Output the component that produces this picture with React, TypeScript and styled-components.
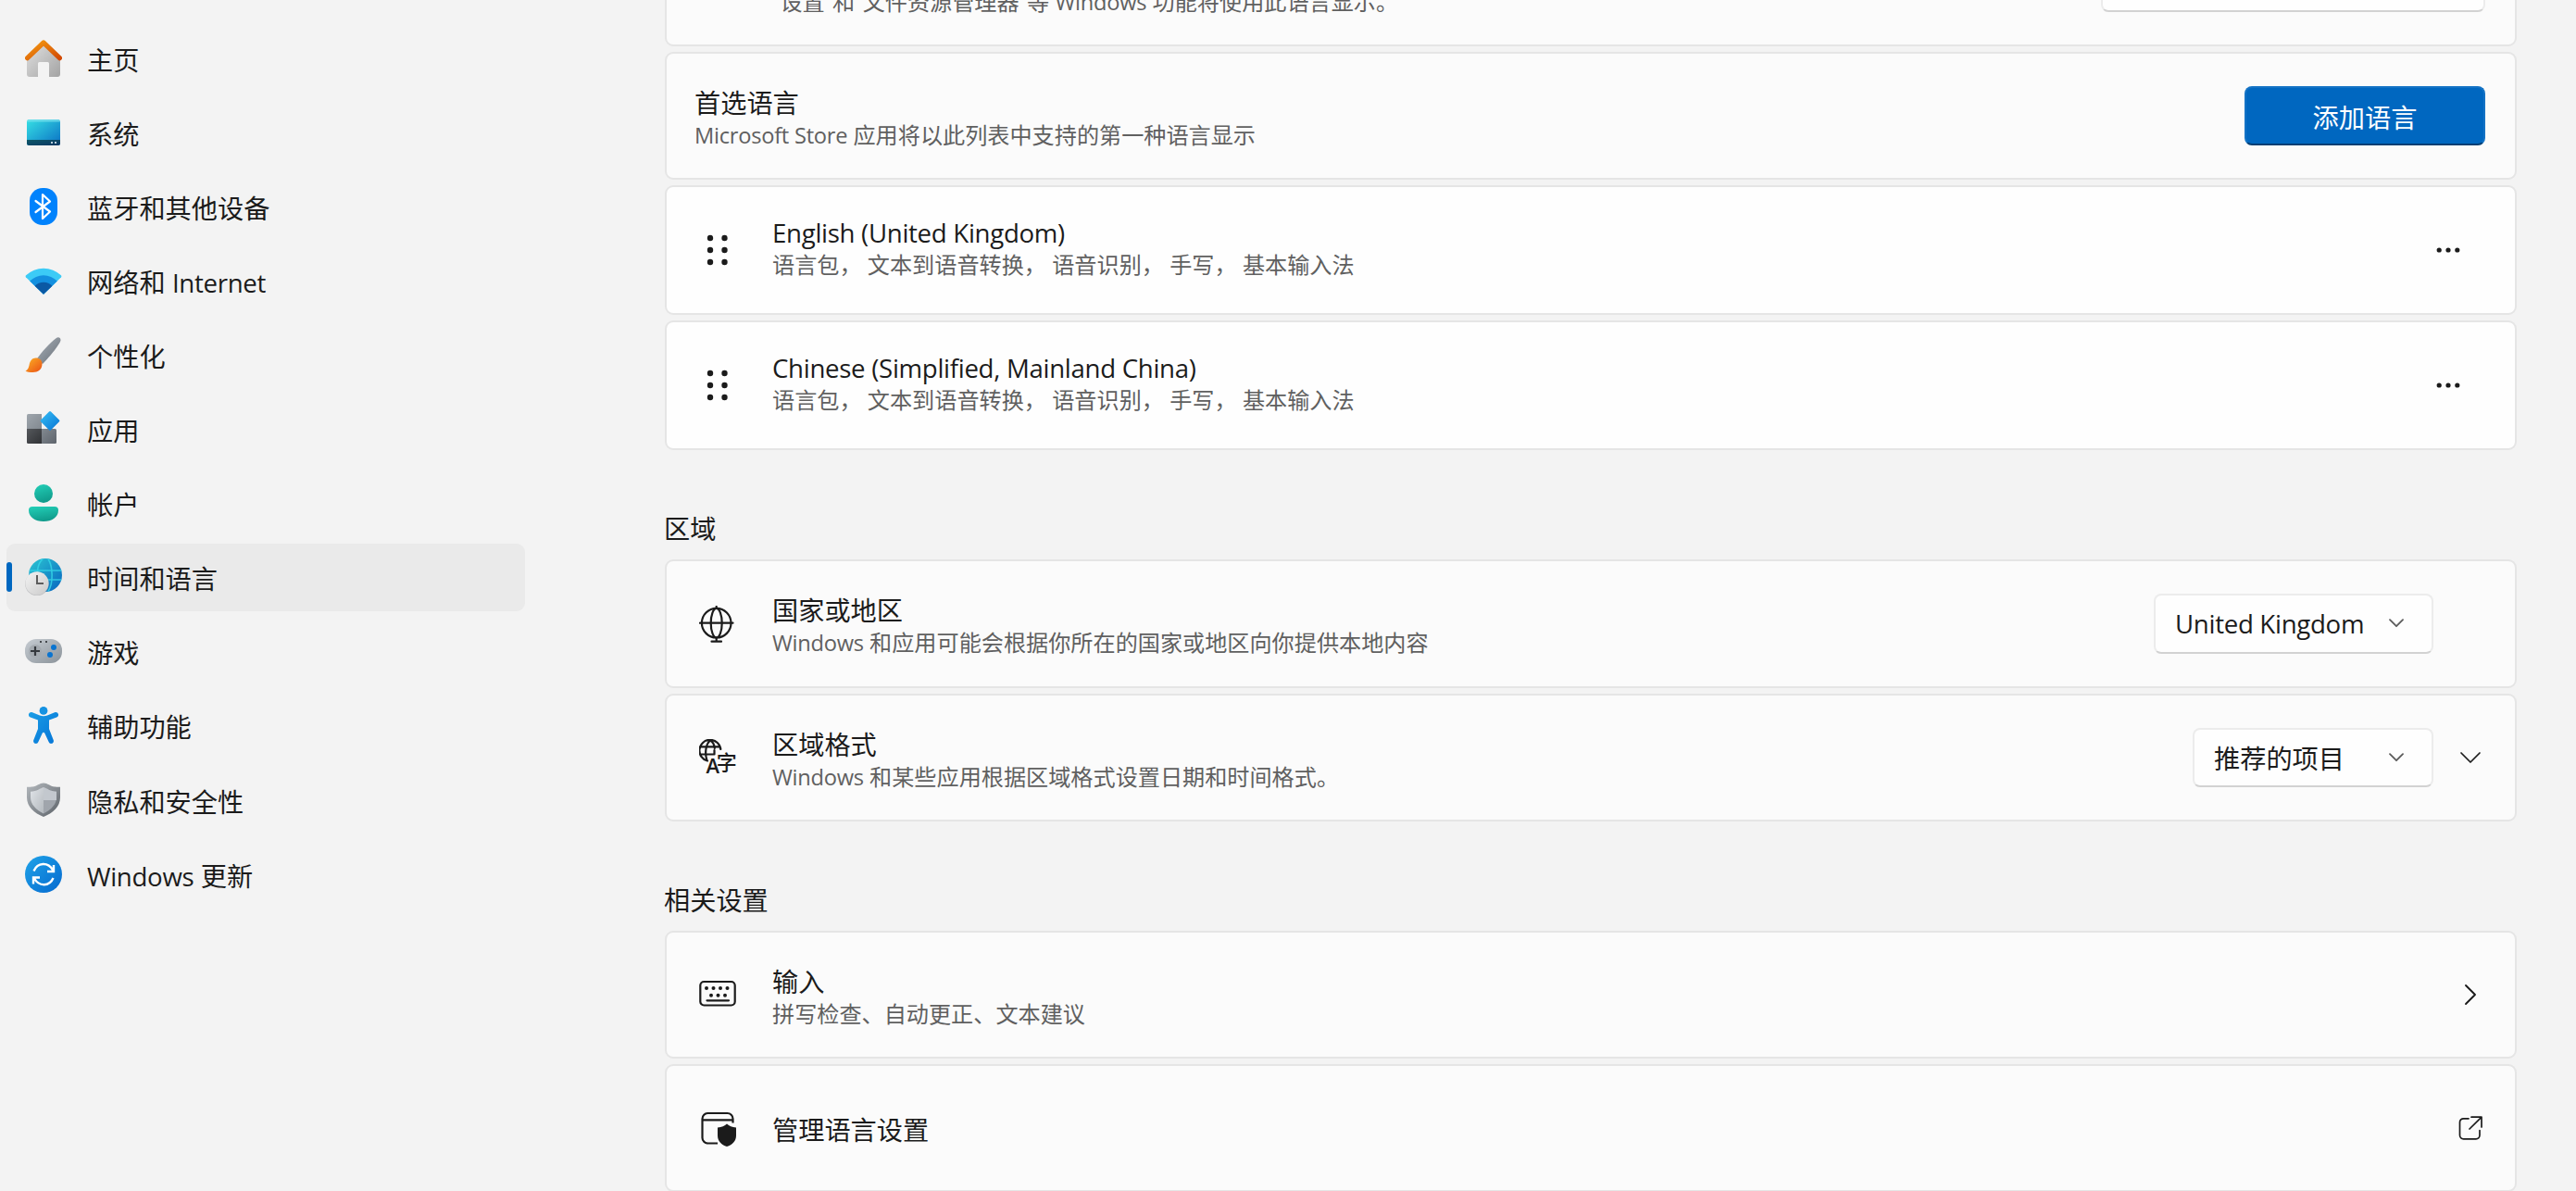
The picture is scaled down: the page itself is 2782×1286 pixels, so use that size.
import type { ReactNode } from 'react';
import styled, { createGlobalStyle, css } from 'styled-components';

const GlobalStyle = createGlobalStyle`
    * {
        box-sizing: border-box;
    }

    body {
        margin: 0;
        height: 1286px;
        overflow: hidden;
        background-color: #f3f3f3;
        color: #1b1b1b;
        font-family: 'Open Sans', 'Noto Sans CJK SC', sans-serif;
        font-size: 28.2px;
    }
`;

const Layout = styled.div`
    display: flex;
    height: 1286px;
    overflow: hidden;
`;

const Sidebar = styled.nav`
    flex: 0 0 718px;
    display: flex;
    flex-direction: column;
    gap: 7.1px;
    padding: 26.1px 0 0 7px;
`;

const NavItem = styled.a<{ $active?: boolean }>`
    display: flex;
    align-items: center;
    width: 560px;
    height: 73px;
    flex: none;
    border-radius: 9px;
    background-color: ${(p) => (p.$active ? '#eaeaea' : 'transparent')};
`;

const Indicator = styled.span<{ $active?: boolean }>`
    width: 6px;
    height: 32px;
    margin-right: 14px;
    border-radius: 3px;
    background-color: ${(p) => (p.$active ? '#0067c0' : 'transparent')};
`;

const NavLabel = styled.span`
    margin: 4px 0 0 27px;
    line-height: 40px;
    white-space: pre;
`;

const Latin = styled.span`
    font-size: 0.98em;
    letter-spacing: -0.011em;
`;

const Main = styled.main`
    width: 2000px;
    margin-top: -88px;
    flex: none;
`;

const Section = styled.section`
    display: flex;
    flex-direction: column;
    gap: 6px;
`;

const SectionTitle = styled.h2<{ $height: number }>`
    height: ${(p) => p.$height}px;
    margin: 0 0 -6px -1px;
    padding-bottom: 13px;
    display: flex;
    align-items: flex-end;
    font-size: 28.2px;
    font-weight: 400;
    line-height: 40px;
`;

const Card = styled.div<{ $white?: boolean; $height?: number; $slot?: boolean }>`
    display: flex;
    align-items: center;
    flex: none;
    height: ${(p) => p.$height ?? 138}px;
    padding: 0 ${(p) => (p.$slot ? 8 : 32)}px 0 30px;
    border: 2px solid #e5e5e5;
    border-radius: 9px;
    background-color: ${(p) => (p.$white ? '#fefefe' : '#fbfbfb')};
`;

const IconSlot = styled.div`
    display: flex;
    width: 84px;
    padding-left: 5px;
`;

const CardText = styled.div<{ $raised?: boolean }>`
    flex: 1;
    padding-${(p) => (p.$raised ? 'bottom: 7' : 'top: 3')}px;
    white-space: pre;
`;

const Title = styled.div`
    line-height: 38px;
`;

const Description = styled.div`
    color: #606060;
    font-size: 24.15px;
    line-height: 32px;
`;

const raised = css`
    border-radius: 8px;
    border: 2px solid #ececec;
    border-bottom-color: #d2d2d2;
    background-color: #fefefe;
`;

const Select = styled.div<{ $width: number; $height?: number }>`
    ${raised}
    height: ${(p) => p.$height ?? 65}px;
    display: flex;
    align-items: center;
    justify-content: space-between;
    width: ${(p) => p.$width}px;
    padding: 0 30px 1px 21px;
    white-space: pre;
`;

const PrimaryButton = styled.button`
    width: 260px;
    height: 64px;
    padding: 0;
    border: 2px solid #1473c5;
    border-bottom-color: #003e73;
    border-radius: 8px;
    background-color: #0067c0;
    color: #fff;
    font: inherit;
`;

const ActionSlot = styled.div`
    display: flex;
    align-items: center;
    justify-content: center;
    width: 80px;
`;

// Latin runs sit a touch tighter than the Chinese text around them
const mixed = (text: string): ReactNode =>
    text
        .split(/([A-Za-z][\x20-\x7e]*[A-Za-z)])/)
        .map((part, i) => (i % 2 ? <Latin key={i}>{part}</Latin> : part));

const NavSvg = ({ children }: { children: ReactNode }) => (
    <svg width="40" height="40" viewBox="0 0 40 40" fill="none">
        {children}
    </svg>
);

const Gradient = ({ id, from, to }: { id: string; from: string; to: string }) => (
    <linearGradient id={id} x1="0" y1="0" x2="1" y2="1">
        <stop stopColor={from} />
        <stop offset="1" stopColor={to} />
    </linearGradient>
);

const HomeIcon = () => (
    <NavSvg>
        <Gradient id="homeBody" from="#e2e2e2" to="#a3a3a3" />
        <Gradient id="homeRoof" from="#f59b10" to="#d24a05" />
        <path d="M2 18 20 3l18 15v19a3 3 0 0 1-3 3h-9V25.500a1.500 1.500 0 0 0-1.500-1.500h-9a1.500 1.500 0 0 0-1.500 1.500V40H5a3 3 0 0 1-3-3z" fill="url(#homeBody)" />
        <path d="M2.600 19.700 20 3l17.400 16.700" stroke="url(#homeRoof)" strokeWidth="5.200" strokeLinecap="round" strokeLinejoin="round" />
    </NavSvg>
);

const SystemIcon = () => (
    <NavSvg>
        <Gradient id="sysScreen" from="#36e0e4" to="#0a6fc4" />
        <Gradient id="sysBar" from="#0e5868" to="#0b3763" />
        <rect x="2" y="6" width="36" height="28" rx="2.500" fill="url(#sysScreen)" />
        <path d="M2 8.500A2.500 2.500 0 0 1 4.500 6h31A2.500 2.500 0 0 1 38 8.500z" fill="#7fe3ee" opacity=".7" />
        <path d="M2 28h36v3.500a2.500 2.500 0 0 1-2.500 2.500h-31A2.500 2.500 0 0 1 2 31.500z" fill="url(#sysBar)" />
        <path d="M28 30h2v2h-2zM32 30h2v2h-2z" fill="#b9cddb" />
    </NavSvg>
);

const BluetoothIcon = () => (
    <NavSvg>
        <rect x="5" width="30" height="40" rx="14" fill="#0082fc" />
        <path d="m11.500 14 15.500 11.500-8 7.500V7l8 7.500L11.500 26" stroke="#fff" strokeWidth="2.200" strokeLinejoin="round" strokeLinecap="round" />
    </NavSvg>
);

const WifiIcon = () => (
    <NavSvg>
        <path d="M20 34.800.9 16.200q-.7-1 .2-1.900A27.500 27.500 0 0 1 38.900 14.300q.9.900.2 1.900z" fill="#3ccbf6" />
        <path d="M20 34.800 5.200 20.400a21 21 0 0 1 29.600 0z" fill="#1490df" />
        <path d="M20 34.800 10.600 25.700a13.200 13.200 0 0 1 18.800 0z" fill="#0b59a4" />
    </NavSvg>
);

const BrushIcon = () => (
    <NavSvg>
        <Gradient id="brushHandle" from="#a9b1b9" to="#686f77" />
        <Gradient id="brushTip" from="#fcb426" to="#ea4f14" />
        <path d="M12.500 25C18 17 27 7 33.500 2.200c2.300-1.700 5-.9 5 2C38.500 7.500 27 22 19 30z" fill="url(#brushHandle)" />
        <path d="M11.500 23.500c4.500 0 7 2.500 7 6.500 0 6-4.500 9-10 9-3.500 0-6.500-.4-8-1.500 3-1.500 3.500-3.500 4.200-7 .8-4.200 3.300-7 6.800-7z" fill="url(#brushTip)" />
    </NavSvg>
);

const AppsIcon = () => (
    <NavSvg>
        <Gradient id="appsDark" from="#55585c" to="#303235" />
        <Gradient id="appsLight" from="#9fa6ad" to="#828990" />
        <Gradient id="appsMid" from="#828990" to="#5e646c" />
        <Gradient id="appsBlue" from="#38c0f5" to="#0673d4" />
        <path d="M3.500 4H18v16H2V5.500A1.500 1.500 0 0 1 3.500 4z" fill="url(#appsLight)" />
        <path d="M2 20h16v16H3.500A1.500 1.500 0 0 1 2 34.500z" fill="url(#appsDark)" />
        <path d="M18 20h14.500a1.500 1.500 0 0 1 1.500 1.500v13a1.500 1.500 0 0 1-1.500 1.500H18z" fill="url(#appsMid)" />
        <path d="M26 1.400q1-1 2 0l9 9q.9.900 0 1.800l-9 9q-1 1-2 0l-9-9q-.9-.9 0-1.800z" fill="url(#appsBlue)" />
    </NavSvg>
);

const AccountIcon = () => (
    <NavSvg>
        <linearGradient id="account" x1="0" y1="0" x2=".3" y2="1">
            <stop stopColor="#23d0b8" />
            <stop offset="1" stopColor="#109c8c" />
        </linearGradient>
        <circle cx="20" cy="10" r="10" fill="url(#account)" />
        <path d="M8 24h24a4 4 0 0 1 4 4c0 7.500-7 12-16 12S4 35.500 4 28a4 4 0 0 1 4-4z" fill="url(#account)" />
    </NavSvg>
);

const TimeIcon = () => (
    <NavSvg>
        <Gradient id="timeGlobe" from="#2cc6d2" to="#0664c0" />
        <Gradient id="timeClock" from="#f4f4f4" to="#c9c9c9" />
        <circle cx="22" cy="18" r="18" fill="url(#timeGlobe)" />
        <path d="M4.600 13h34.800M22 23h17.400M19 0.600C13 6 12 17 15 27M25 .6C30 8 31 27 25 35.500" stroke="#35d3e6" strokeWidth="1.600" opacity=".85" />
        <circle cx="13" cy="27.500" r="12.800" fill="#9d9fa3" opacity=".55" />
        <circle cx="13" cy="26.800" r="12.600" fill="url(#timeClock)" />
        <path d="M13 18v9h7" stroke="#5d5d5d" strokeWidth="2" />
    </NavSvg>
);

const GameIcon = () => (
    <NavSvg>
        <Gradient id="gameBody" from="#c6ccd2" to="#8b939a" />
        <rect y="7" width="40" height="26" rx="12" fill="url(#gameBody)" />
        <circle cx="11" cy="20" r="7" fill="#a4aab0" />
        <path d="M11 15v10M6 20h10" stroke="#35393e" strokeWidth="2.200" />
        <circle cx="31" cy="16" r="3" fill="#0a74d0" />
        <circle cx="27" cy="24" r="3" fill="#0a74d0" />
        <path d="M16 9h2v2h-2zM22 9h2v2h-2z" fill="#45494d" />
    </NavSvg>
);

const AccessibilityIcon = () => (
    <NavSvg>
        <Gradient id="access" from="#1b9de6" to="#0474d6" />
        <circle cx="20" cy="4.400" r="4.400" fill="#1592e2" />
        <path d="M4 8.300c.5-1.900 2.300-2.700 4-2l8 3.200c2.600 1 5.400 1 8 0l8-3.200c1.700-.7 3.500.1 4 2 .3 1.300-.4 2.600-1.800 3.100L26 14.600V24l4.700 12c.6 1.700-.1 3.200-1.600 3.800-1.500.5-2.900-.2-3.500-1.800L21.200 28.500q-1.200-1.600-2.400 0L14.400 38c-.6 1.600-2 2.300-3.500 1.800-1.500-.6-2.200-2.100-1.600-3.800L14 24v-9.400l-8.200-3.200C4.400 10.900 3.700 9.600 4 8.300z" fill="url(#access)" />
    </NavSvg>
);

const ShieldIcon = () => (
    <NavSvg>
        <Gradient id="shieldRim" from="#b3b8bd" to="#5c6268" />
        <Gradient id="shieldIn" from="#e0e4e8" to="#b4b9be" />
        <path d="M20 1.500c4.500 0 7 3.500 12 4 2.500.3 6 .3 6 .3V17c0 10-8 17-18 21C10 34 2 27 2 17V5.800s3.500 0 6-.3c5-.5 7.500-4 12-4z" fill="url(#shieldRim)" />
        <path d="M20 6c-3.500 1-7 4.500-14 4.700V17c0 7.500 5.500 13 14 17.400z" fill="url(#shieldIn)" />
        <path d="M20 6c3.500 1 7 4.500 14 4.700V17c0 7.500-5.500 13-14 17.400z" fill="#a0a5ac" />
        <path d="M20 6c3.500 1 7 4.500 14 4.700V20H20z" fill="#c3c8ce" />
    </NavSvg>
);

const UpdateIcon = () => (
    <NavSvg>
        <Gradient id="update" from="#1fa3e8" to="#0569cf" />
        <circle cx="20" cy="20" r="20" fill="url(#update)" />
        <path d="M9.500 16.500C13.500 7 25 6.500 30 15.500M31 10v7h-7M30.500 24C26.500 33.500 15 33.500 10 24.500M9 30.500v-7h7" stroke="#fff" strokeWidth="2.400" />
    </NavSvg>
);

const LineSvg = ({ children }: { children: ReactNode }) => (
    <svg width="40" height="40" viewBox="0 0 40 40" fill="none" stroke="#1b1b1b" strokeWidth="2.200" strokeLinecap="round" strokeLinejoin="round">
        {children}
    </svg>
);

const GripIcon = () => (
    <LineSvg>
        {[7, 20, 33].map((y) => (
            <g key={y} fill="#1b1b1b" stroke="none">
                <circle cx="12" cy={y} r="3.200" />
                <circle cx="27.500" cy={y} r="3.200" />
            </g>
        ))}
    </LineSvg>
);

const GlobeIcon = () => (
    <LineSvg>
        <circle cx="18.700" cy="18.700" r="15.800" />
        <ellipse cx="18.700" cy="18.700" rx="6" ry="15.800" />
        <path d="M1 18.700h35.500M18.700 1v2M18.700 34.500V38M13.500 38.700h10.500" />
    </LineSvg>
);

const RegionFormatIcon = () => (
    <LineSvg>
        <path d="M9 23.500A11.500 11.500 0 1 1 23.300 11M8.500 23C6 16 7 5 12 1.500 15 3 16.500 7 16.800 10M2 8.300h20M1.500 16.500h15V12" />
        <g fill="#1b1b1b" stroke="none">
            <text x="7.600" y="37" fontSize="22" fontWeight="600" textLength="14.500" lengthAdjust="spacingAndGlyphs">A</text>
            <text x="18.800" y="33" fontSize="22" fontFamily="'Noto Sans CJK SC'" fontWeight="500">字</text>
        </g>
    </LineSvg>
);

const KeyboardIcon = () => (
    <LineSvg>
        <rect x="1.300" y="6" width="37.400" height="25.500" rx="4" />
        <path d="M8.500 26.300h23.500" />
        <g fill="#1b1b1b" stroke="none">
            {[8, 15.5, 23, 30.5].map((x) => <circle key={x} cx={x} cy="13" r="2" />)}
            {[13, 20.5, 28].map((x) => <circle key={x} cx={x} cy="20.700" r="2" />)}
        </g>
    </LineSvg>
);

const AdminLanguageIcon = () => (
    <LineSvg>
        <path d="M36.500 14.500V10a6 6 0 0 0-6-6h-21a6 6 0 0 0-6 6v20.500a6 6 0 0 0 6 6H20M3.500 11.300h33" strokeLinecap="butt" />
        <path d="M30 15.500c2.500 2.200 5.500 3.700 10 4V28c0 6-4 10-10 12-6-2-10-6-10-12v-8.500c4.500-.3 7.500-1.800 10-4z" fill="#1b1b1b" stroke="none" />
    </LineSvg>
);

const Chevron = () => (
    <svg width="16" height="10" viewBox="0 0 16 10" fill="none" stroke="#5c5c5c" strokeWidth="1.800" strokeLinecap="round" strokeLinejoin="round">
        <path d="m1 1.200 7 7 7-7" />
    </svg>
);

const ExpandIcon = () => (
    <svg width="24" height="14" viewBox="0 0 24 14" fill="none" stroke="#1b1b1b" strokeWidth="1.700" strokeLinecap="round" strokeLinejoin="round">
        <path d="m2 2 10 10L22 2" />
    </svg>
);

const ForwardIcon = () => (
    <svg width="14" height="24" viewBox="0 0 14 24" fill="none" stroke="#1b1b1b" strokeWidth="1.900" strokeLinecap="round" strokeLinejoin="round">
        <path d="m2 2 10 10L2 22" />
    </svg>
);

const OpenIcon = () => (
    <svg width="26" height="26" viewBox="0 0 26 26" fill="none" stroke="#1b1b1b" strokeWidth="1.700" strokeLinecap="round" strokeLinejoin="round">
        <path d="M11 2.800H5.500A4 4 0 0 0 1.500 6.800v14a4 4 0 0 0 4 4h13.500a4 4 0 0 0 4-4V15.500M14 1.200h11V12M24.800 1.300 12 14" />
    </svg>
);

const MoreIcon = () => (
    <svg width="26" height="6" viewBox="0 0 26 6" fill="#1b1b1b">
        <circle cx="3.200" cy="3" r="2.600" />
        <circle cx="13" cy="3" r="2.600" />
        <circle cx="22.800" cy="3" r="2.600" />
    </svg>
);

const navItems = [
    { label: '主页', Icon: HomeIcon },
    { label: '系统', Icon: SystemIcon },
    { label: '蓝牙和其他设备', Icon: BluetoothIcon },
    { label: '网络和 Internet', Icon: WifiIcon },
    { label: '个性化', Icon: BrushIcon },
    { label: '应用', Icon: AppsIcon },
    { label: '帐户', Icon: AccountIcon },
    { label: '时间和语言', Icon: TimeIcon, active: true },
    { label: '游戏', Icon: GameIcon },
    { label: '辅助功能', Icon: AccessibilityIcon },
    { label: '隐私和安全性', Icon: ShieldIcon },
    { label: 'Windows 更新', Icon: UpdateIcon },
];

const languages = ['English (United Kingdom)', 'Chinese (Simplified, Mainland China)'];

type RowProps = {
    icon?: ReactNode;
    title: string;
    description?: string;
    white?: boolean;
    height?: number;
    slot?: boolean;
    children?: ReactNode;
};

const Row = ({ icon, title, description, white, height, slot, children }: RowProps) => (
    <Card $white={white} $height={height} $slot={slot}>
        {icon && <IconSlot>{icon}</IconSlot>}
        <CardText $raised={white}>
            <Title>{mixed(title)}</Title>
            {description && <Description>{mixed(description)}</Description>}
        </CardText>
        {children}
    </Card>
);

export default function App() {
    return (
        <>
            <GlobalStyle />
            <Layout>
                <Sidebar>
                    {navItems.map(({ label, Icon, active }) => (
                        <NavItem key={label} $active={active}>
                            <Indicator $active={active} />
                            <Icon />
                            <NavLabel>{mixed(label)}</NavLabel>
                        </NavItem>
                    ))}
                </Sidebar>
                <Main>
                    <Section>
                        <Row icon={<></>} title={'\u00a0'} description="“设置”和“文件资源管理器”等 Windows 功能将使用此语言显示。">
                            <Select $width={415} $height={64} />
                        </Row>
                        <Row title="首选语言" description="Microsoft Store 应用将以此列表中支持的第一种语言显示">
                            <PrimaryButton>添加语言</PrimaryButton>
                        </Row>
                        {languages.map((name) => (
                            <Row
                                key={name}
                                white
                                height={140}
                                icon={<GripIcon />}
                                title={name}
                                description="语言包， 文本到语音转换， 语音识别， 手写， 基本输入法"
                            >
                                <ActionSlot>
                                    <MoreIcon />
                                </ActionSlot>
                            </Row>
                        ))}
                    </Section>
                    <Section>
                        <SectionTitle $height={118}>区域</SectionTitle>
                        <Row
                            slot
                            height={139}
                            icon={<GlobeIcon />}
                            title="国家或地区"
                            description="Windows 和应用可能会根据你所在的国家或地区向你提供本地内容"
                        >
                            <Select $width={302}>
                                {mixed('United Kingdom')}
                                <Chevron />
                            </Select>
                            <ActionSlot />
                        </Row>
                        <Row
                            slot
                            icon={<RegionFormatIcon />}
                            title="区域格式"
                            description="Windows 和某些应用根据区域格式设置日期和时间格式。"
                        >
                            <Select $width={260} $height={64}>
                                推荐的项目
                                <Chevron />
                            </Select>
                            <ActionSlot>
                                <ExpandIcon />
                            </ActionSlot>
                        </Row>
                    </Section>
                    <Section>
                        <SectionTitle $height={118}>相关设置</SectionTitle>
                        <Row slot icon={<KeyboardIcon />} title="输入" description="拼写检查、自动更正、文本建议">
                            <ActionSlot>
                                <ForwardIcon />
                            </ActionSlot>
                        </Row>
                        <Row slot icon={<AdminLanguageIcon />} title="管理语言设置">
                            <ActionSlot>
                                <OpenIcon />
                            </ActionSlot>
                        </Row>
                    </Section>
                </Main>
            </Layout>
        </>
    );
}
